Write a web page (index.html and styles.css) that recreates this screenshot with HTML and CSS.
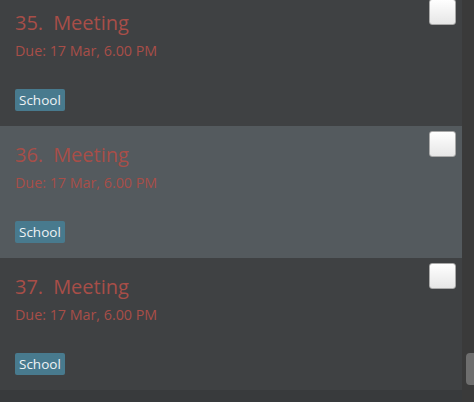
FILE: index.html
```html
<!DOCTYPE html>
<html>
<head>
<meta charset="utf-8">
<link rel="stylesheet" href="styles.css">
</head>
<body>
<div class="app">
  <div class="list">
    <div class="card">
      <div class="content">
        <div class="title"><span class="num">35.</span><span>Meeting</span></div>
        <div class="due">Due: 17 Mar, 6.00 PM</div>
        <div class="tags"><span class="tag">School</span></div>
      </div>
      <div class="check"></div>
    </div>
    <div class="card selected">
      <div class="content">
        <div class="title"><span class="num">36.</span><span>Meeting</span></div>
        <div class="due">Due: 17 Mar, 6.00 PM</div>
        <div class="tags"><span class="tag">School</span></div>
      </div>
      <div class="check"></div>
    </div>
    <div class="card">
      <div class="content">
        <div class="title"><span class="num">37.</span><span>Meeting</span></div>
        <div class="due">Due: 17 Mar, 6.00 PM</div>
        <div class="tags"><span class="tag">School</span></div>
      </div>
      <div class="check"></div>
    </div>
  </div>
  <div class="scrollbar"><div class="thumb"></div></div>
</div>
</body>
</html>
```
FILE: styles.css
```css
html, body {
  margin: 0;
  padding: 0;
  background: #383a3c;
  overflow: hidden;
}
.app {
  display: flex;
  width: 474px;
  height: 402px;
  font-family: "Open Sans", "Noto Sans", sans-serif;
}
.list {
  flex: 1;
  display: flex;
  flex-direction: column;
  margin-top: -6px;
  background: #383a3c;
}
.card {
  height: 132px;
  flex: none;
  display: flex;
  background: #3f4143;
  box-sizing: border-box;
}
.card.selected {
  background: #545a5e;
}
.content {
  flex: 1;
  padding: 15px 0 0 15px;
  display: flex;
  flex-direction: column;
  align-items: flex-start;
}
.title {
  color: #a84e48;
  font-size: 20px;
  line-height: 28px;
  display: flex;
  gap: 10px;
}
.due {
  color: #a84e48;
  font-size: 14.3px;
  line-height: 20px;
  margin-top: 4px;
}
.tags {
  margin-top: 28px;
  display: flex;
}
.tag {
  background: #487a8e;
  color: #eef3f5;
  font-size: 13.5px;
  line-height: 22px;
  height: 22px;
  padding: 0 4px;
  border-radius: 2px;
}
.check {
  flex: none;
  width: 25px;
  height: 24px;
  margin: 5px 6px 0 0;
  border: 1px solid #a8a8a8;
  border-radius: 3px;
  background: linear-gradient(#ffffff, #e6e6e6);
}
.scrollbar {
  width: 12px;
  flex: none;
  background: #3a3a3a;
  display: flex;
  flex-direction: column;
  justify-content: flex-end;
  align-items: flex-end;
  padding-bottom: 17px;
  box-sizing: border-box;
}
.thumb {
  width: 8px;
  height: 32px;
  background: #6e6e6e;
  border-radius: 4px 0 0 4px;
}
```
